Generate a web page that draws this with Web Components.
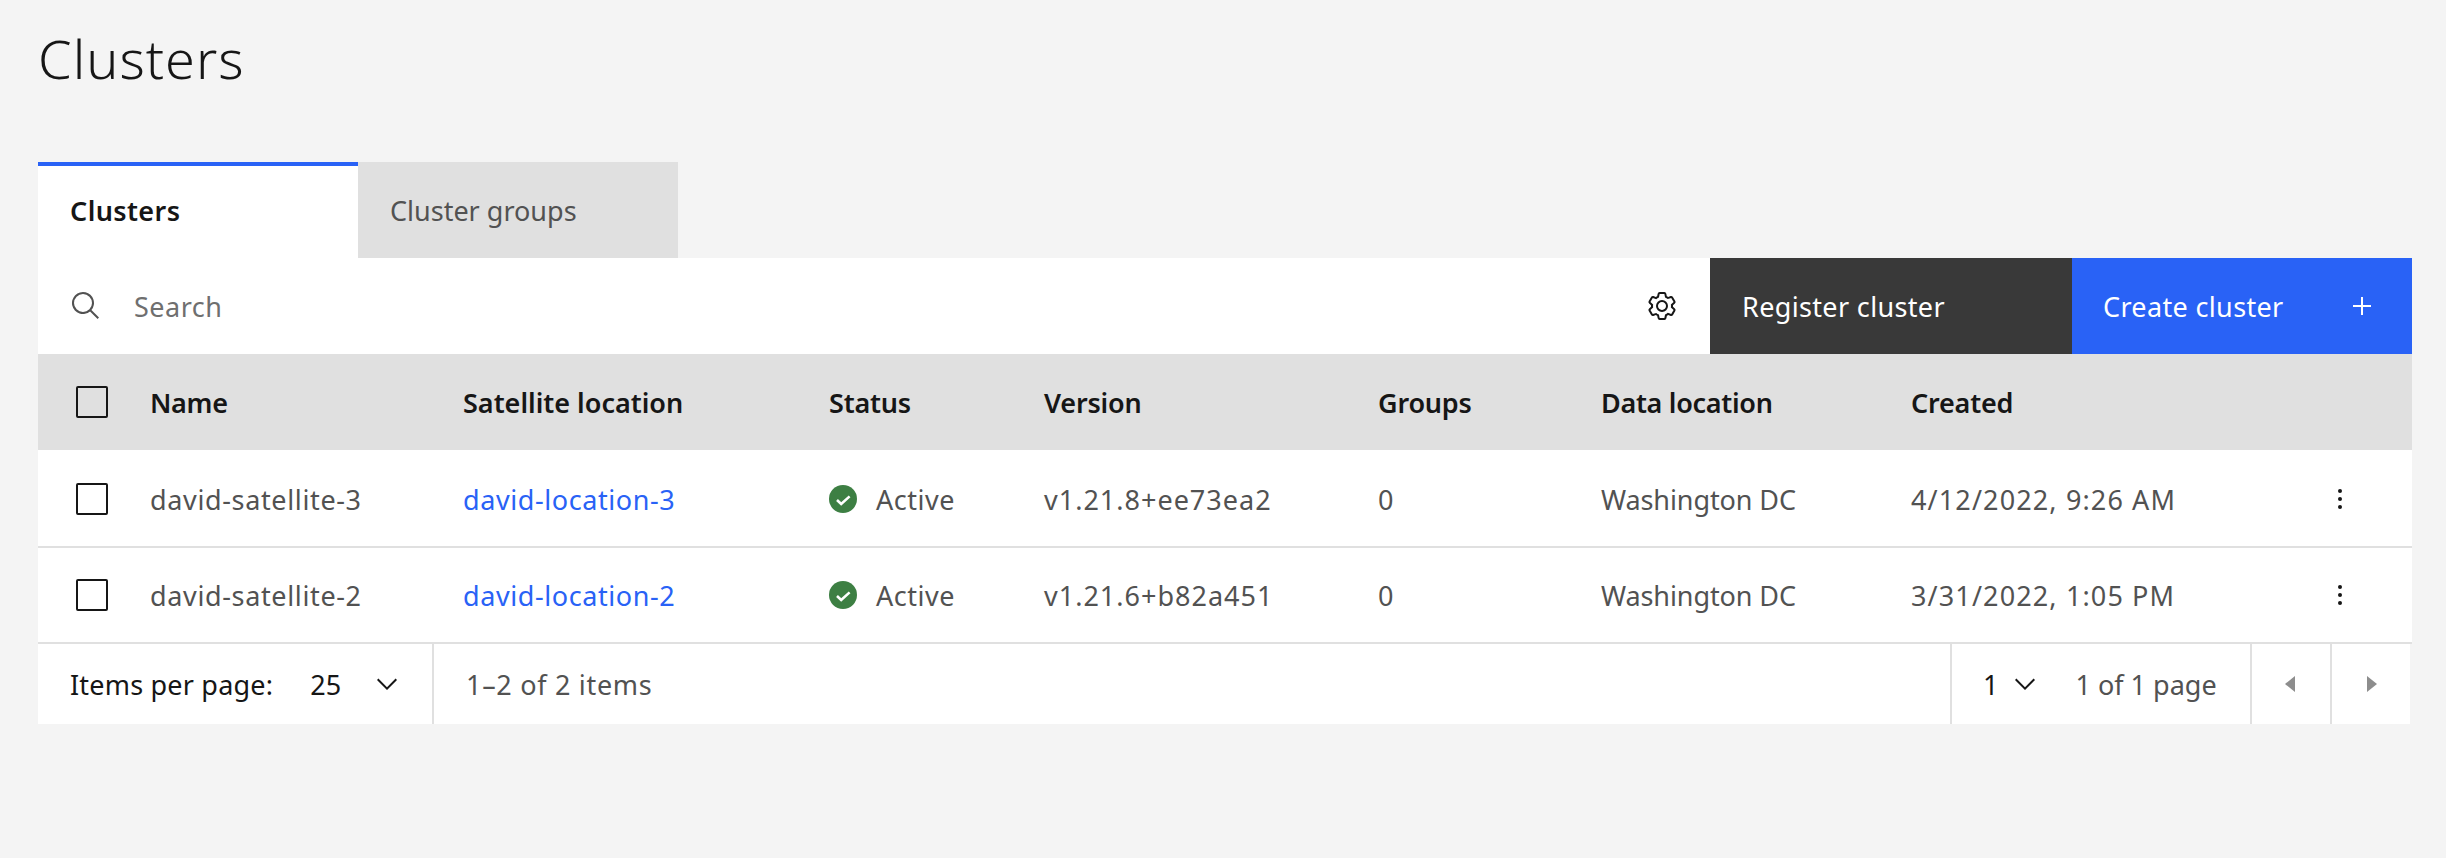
<!DOCTYPE html>
<html>
<head>
<meta charset="utf-8">
<title>Clusters</title>
<style>
  html, body { margin: 0; height: 100%; }
  body {
    background: #f4f4f4;
    color: #161616;
    font-family: "Noto Sans", "Open Sans", sans-serif;
    font-size: 27px;
  }
</style>
</head>
<body>
<cl-page>
  <cl-title slot="title">Clusters</cl-title>
  <cl-tabs slot="tabs"></cl-tabs>
  <cl-toolbar slot="main"></cl-toolbar>
  <cl-table slot="main"></cl-table>
  <cl-pager slot="main"></cl-pager>
</cl-page>

<script>
const COLUMNS = "112px 313px 366px 215px 334px 223px 310px 310px 1fr";
// text spacing per column, the font runs a bit narrower than the reference
const SPACING = [0.64, 0.58, 0.5, 1, 0, -0.1, 1.13];
const HEAD_SPACING = [-0.3, 0, -0.2, -0.2, -0.2, -0.3, -0.2];

const icons = {
  search: `<svg width="32" height="32" viewBox="0 0 32 32" fill="#525252"><path d="M29 27.586l-7.552-7.552a11.018 11.018 0 1 0-1.414 1.414L27.586 29zM4 13a9 9 0 1 1 9 9 9.01 9.01 0 0 1-9-9z"/></svg>`,
  gear: `<svg width="32" height="32" viewBox="0 0 32 32" fill="#161616"><path d="M27 16.76v-1.53l1.92-1.68A2 2 0 0 0 29.3 11l-2.36-4a2 2 0 0 0-1.73-1 2 2 0 0 0-.64.1l-2.43.82a11.35 11.35 0 0 0-1.31-.75l-.51-2.52a2 2 0 0 0-2-1.61h-4.68a2 2 0 0 0-2 1.61l-.51 2.52a11.48 11.48 0 0 0-1.32.75l-2.38-.86A2 2 0 0 0 6.79 6a2 2 0 0 0-1.73 1L2.7 11a2 2 0 0 0 .41 2.51L5 15.24v1.53l-1.89 1.68A2 2 0 0 0 2.7 21l2.36 4a2 2 0 0 0 1.73 1 2 2 0 0 0 .64-.1l2.43-.82a11.35 11.35 0 0 0 1.31.75l.51 2.52a2 2 0 0 0 2 1.61h4.72a2 2 0 0 0 2-1.61l.51-2.52a11.48 11.48 0 0 0 1.32-.75l2.42.82a2 2 0 0 0 .64.1 2 2 0 0 0 1.73-1l2.28-4a2 2 0 0 0-.41-2.51zM25.21 24l-3.43-1.16a8.86 8.86 0 0 1-2.71 1.57L18.36 28h-4.72l-.71-3.55a9.36 9.36 0 0 1-2.7-1.57L6.79 24l-2.36-4 2.72-2.4a8.9 8.9 0 0 1 0-3.13L4.43 12l2.36-4 3.43 1.16a8.86 8.86 0 0 1 2.71-1.57L13.64 4h4.72l.71 3.55a9.36 9.36 0 0 1 2.7 1.57L25.21 8l2.36 4-2.72 2.4a8.9 8.9 0 0 1 0 3.13L27.57 20z"/><path d="M16 22a6 6 0 1 1 6-6 5.94 5.94 0 0 1-6 6zm0-10a3.91 3.91 0 0 0-4 4 3.91 3.91 0 0 0 4 4 3.91 3.91 0 0 0 4-4 3.91 3.91 0 0 0-4-4z"/></svg>`,
  plus: `<svg width="32" height="32" viewBox="0 0 32 32" fill="#fff"><path d="M17 15V7h-2v8H7v2h8v8h2v-8h8v-2z"/></svg>`,
  kebab: `<svg width="32" height="32" viewBox="0 0 32 32" fill="#161616"><circle cx="16" cy="8" r="2"/><circle cx="16" cy="16" r="2"/><circle cx="16" cy="24" r="2"/></svg>`,
  check: `<svg width="28" height="28" viewBox="0 0 28 28"><circle cx="14" cy="14" r="14" fill="#3d7f43"/><path d="M8 15l4.2 4L20.6 11.4" fill="none" stroke="#fff" stroke-width="2.6"/></svg>`,
  chevron: `<svg width="32" height="32" viewBox="0 0 32 32" fill="#161616"><path d="M16 22L6 12l1.4-1.4 8.6 8.6 8.6-8.6L26 12z"/></svg>`,
  left: `<svg width="32" height="32" viewBox="0 0 32 32" fill="#8d8d8d"><path d="M20 24L10 16l10-8z"/></svg>`,
  right: `<svg width="32" height="32" viewBox="0 0 32 32" fill="#8d8d8d"><path d="M12 8l10 8-10 8z"/></svg>`
};

class ClPage extends HTMLElement {
  constructor() {
    super();
    this.attachShadow({mode: "open"});
    this.shadowRoot.innerHTML = `
      <style>
        :host { display: block; padding: 0 34px 0 38px; }
        .main { display: block; }
      </style>
      <slot name="title"></slot>
      <slot name="tabs"></slot>
      <div class="main"><slot name="main"></slot></div>
    `;
  }
}

class ClTitle extends HTMLElement {
  constructor() {
    super();
    this.attachShadow({mode: "open"});
    this.shadowRoot.innerHTML = `
      <style>
        :host { display: block; height: 162px; padding-top: 20px; box-sizing: border-box;
          font-size: 54px; font-weight: 300; line-height: 76px; letter-spacing: 1px; color: #161616; }
      </style>
      <slot></slot>
    `;
  }
}

class ClTabs extends HTMLElement {
  constructor() {
    super();
    this.attachShadow({mode: "open"});
    this.shadowRoot.innerHTML = `
      <style>
        :host { display: flex; height: 96px; }
        div { width: 320px; box-sizing: border-box; padding: 0 32px; display: flex; align-items: center; }
        .on { background: #fff; border-top: 4px solid #2962f6; font-weight: 600; color: #161616; padding-bottom: 4px; letter-spacing: .4px; }
        .off { background: #e0e0e0; color: #525252; }
      </style>
      <div class="on">Clusters</div>
      <div class="off">Cluster groups</div>
    `;
  }
}

class ClToolbar extends HTMLElement {
  constructor() {
    super();
    this.attachShadow({mode: "open"});
    this.shadowRoot.innerHTML = `
      <style>
        :host { display: flex; height: 96px; background: #fff; align-items: stretch; }
        .search { flex: 1; display: flex; align-items: center; padding-left: 32px; color: #6f6f6f; }
        .search span { margin-left: 32px; flex: 1; letter-spacing: .5px; }
        .gear { display: flex; align-items: center; padding-right: 32px; }
        .btn { display: flex; align-items: center; padding-left: 32px; box-sizing: border-box; color: #fff; letter-spacing: .35px; }
        .reg { width: 362px; background: #393939; }
        .new { width: 340px; background: #2962f6; justify-content: space-between; padding-left: 31px; padding-right: 34px; }
        svg { display: block; }
      </style>
      <div class="search">${icons.search}<span>Search</span></div>
      <div class="gear">${icons.gear}</div>
      <div class="btn reg">Register cluster</div>
      <div class="btn new">Create cluster ${icons.plus}</div>
    `;
  }
}

class ClRow extends HTMLElement {
  constructor() {
    super();
    this.attachShadow({mode: "open"});
  }

  connectedCallback() {
    this.render();
  }

  render() {
    const head = this.hasAttribute("data-head");
    const c = JSON.parse(this.dataset.cells);
    const more = head ? "" : icons.kebab;
    const cells = c.map((text, i) => {
      if (head) return `<div style="letter-spacing:${HEAD_SPACING[i]}px">${text}</div>`;
      const s = `letter-spacing:${SPACING[i]}px`;
      if (i === 1) return `<div style="${s}"><a>${text}</a></div>`;
      if (i === 2) return `<div style="${s}" class="ok">${icons.check}${text}</div>`;
      return `<div style="${s}">${text}</div>`;
    }).join("");
    this.shadowRoot.innerHTML = `
      <style>
        :host { display: grid; grid-template-columns: ${COLUMNS}; align-items: center; height: 96px; box-sizing: border-box; }
        :host([data-head]) { background: #e0e0e0; font-weight: 600; color: #161616; }
        :host(:not([data-head])) { background: #fff; color: #525252; border-bottom: 2px solid #e0e0e0; }
        :host([data-first]) { height: 98px; border-top: 2px solid #fff; }
        .box { width: 32px; height: 32px; box-sizing: border-box; border: 2px solid #161616; border-radius: 2px; margin-left: 38px; }
        a { color: #2962f6; }
        .ok { display: flex; align-items: center; gap: 19px; }
        .more { display: flex; justify-content: flex-end; padding-right: 56px; }
        svg { display: block; flex: none; }
      </style>
      <div class="box"></div>
      ${cells}
      <div class="more">${more}</div>
    `;
  }
}

class ClTable extends HTMLElement {
  constructor() {
    super();
    this.attachShadow({mode: "open"});
    const rows = [
      ["Name", "Satellite location", "Status", "Version", "Groups", "Data location", "Created"],
      ["david-satellite-3", "david-location-3", "Active", "v1.21.8+ee73ea2", "0", "Washington DC", "4/12/2022, 9:26 AM"],
      ["david-satellite-2", "david-location-2", "Active", "v1.21.6+b82a451", "0", "Washington DC", "3/31/2022, 1:05 PM"]
    ];
    this.shadowRoot.innerHTML = `<style>:host { display: block; }</style>`;
    rows.forEach((cells, i) => {
      const row = document.createElement("cl-row");
      row.dataset.cells = JSON.stringify(cells);
      if (i === 0) row.setAttribute("data-head", "");
      if (i === 1) row.setAttribute("data-first", "");
      this.shadowRoot.appendChild(row);
    });
  }
}

class ClPager extends HTMLElement {
  constructor() {
    super();
    this.attachShadow({mode: "open"});
    this.shadowRoot.innerHTML = `
      <style>
        :host { display: flex; height: 80px; margin-right: 2px; background: #fff; align-items: stretch; color: #525252; }
        .cell { display: flex; align-items: center; box-sizing: border-box; }
        .per { width: 396px; padding-left: 32px; color: #161616; border-right: 2px solid #e0e0e0; letter-spacing: .2px; }
        .per .val { margin-left: 37px; }
        .per svg { margin-left: 30px; }
        .count { flex: 1; padding-left: 32px; letter-spacing: .7px; }
        .page { width: 300px; padding-left: 31px; border-left: 2px solid #e0e0e0; }
        .page .val { color: #161616; }
        .page svg { margin-left: 11px; }
        .page .of { margin-left: 34px; }
        .nav { width: 80px; justify-content: center; border-left: 2px solid #e0e0e0; }
        svg { display: block; }
      </style>
      <div class="cell per"><span>Items per page:</span><span class="val">25</span>${icons.chevron}</div>
      <div class="cell count">1–2 of 2 items</div>
      <div class="cell page"><span class="val">1</span>${icons.chevron}<span class="of">1 of 1 page</span></div>
      <div class="cell nav">${icons.left}</div>
      <div class="cell nav">${icons.right}</div>
    `;
  }
}

customElements.define("cl-page", ClPage);
customElements.define("cl-title", ClTitle);
customElements.define("cl-tabs", ClTabs);
customElements.define("cl-toolbar", ClToolbar);
customElements.define("cl-row", ClRow);
customElements.define("cl-table", ClTable);
customElements.define("cl-pager", ClPager);
</script>
</body>
</html>
